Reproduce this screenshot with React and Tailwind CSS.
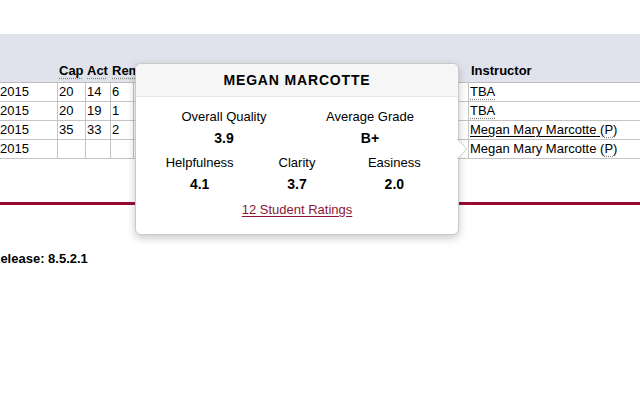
const ROWS = [
  { term: "2015", cap: "20", act: "14", rem: "6", instructor: "tba" },
  { term: "2015", cap: "20", act: "19", rem: "1", instructor: "tba" },
  { term: "2015", cap: "35", act: "33", rem: "2", instructor: "link" },
  { term: "2015", cap: "", act: "", rem: "", instructor: "plain" },
];

const dotted = "underline decoration-dotted decoration-[#888] underline-offset-[3px]";

function Instructor({ kind }) {
  if (kind === "tba") return <span className={dotted}>TBA</span>;
  return (
    <span>
      <span className={kind === "link" ? "underline underline-offset-[2px]" : ""}>
        Megan Mary Marcotte{" "}
      </span>
      (<span className={dotted}>P</span>)
    </span>
  );
}

function Stat({ label, value }) {
  return (
    <div className="flex flex-col items-center">
      <div className="leading-4">{label}</div>
      <div className="leading-4 mt-[5px] font-bold text-[14px]">{value}</div>
    </div>
  );
}

function RatingPopover() {
  return (
    <div className="absolute left-[135px] top-[63px] w-[324px] h-[172px] bg-white border border-[#c9c9c9] rounded-[6px] shadow-[0_3px_8px_rgba(0,0,0,0.22)]">
      <div className="h-[33px] bg-[#f6f6f6] border-b border-[#e6e6e6] rounded-t-[6px] flex items-center justify-center">
        <span className="font-bold text-[14px] tracking-[0.06em]">MEGAN MARCOTTE</span>
      </div>
      <div className="px-[15px] pt-[12px]">
        <div className="grid grid-cols-2">
          <Stat label="Overall Quality" value="3.9" />
          <Stat label="Average Grade" value="B+" />
        </div>
        <div className="grid grid-cols-3 mt-[9px]">
          <Stat label="Helpfulness" value="4.1" />
          <Stat label="Clarity" value="3.7" />
          <Stat label="Easiness" value="2.0" />
        </div>
        <div className="mt-[10px] text-center leading-4">
          <span className="text-[#8c1538] underline underline-offset-[2px]">12 Student Ratings</span>
        </div>
      </div>
      {/* arrow */}
      <svg className="absolute right-[-10px] top-[75px]" width="11" height="20" viewBox="0 0 11 20">
        <polygon points="0,0 10,10 0,20" fill="#fff" />
        <polyline points="0,0 10,10 0,20" fill="none" stroke="#d0d0d0" strokeWidth="1" />
      </svg>
    </div>
  );
}

export default function App() {
  return (
    <div className="relative w-[640px] h-[400px] overflow-hidden bg-white text-black text-[13px] font-['Liberation_Sans',Arial,sans-serif]">
      <div className="h-[34px]" />
      {/* header band */}
      <div className="h-[49px] bg-[#e1e3ec] border-b border-[#bdbdbd] flex items-end pb-[2px] font-bold">
        <div className="w-[58px]" />
        <div className="w-[28px] pl-[1px]"><span className={dotted}>Cap</span></div>
        <div className="w-[25px] pl-[1px]"><span className={dotted}>Act</span></div>
        <div className="w-[23px] pl-[1px] whitespace-nowrap"><span className={dotted}>Rem</span></div>
        <div className="w-[335px]" />
        <div className="pl-[2px]">Instructor</div>
      </div>
      {ROWS.map((r, i) => (
        <div key={i} className="h-[19px] flex border-b border-[#c4c4c4] leading-[18px]">
          <div className="w-[58px] border-r border-[#c4c4c4]">{r.term}</div>
          <div className="w-[28px] border-r border-[#c4c4c4] pl-[1px]">{r.cap}</div>
          <div className="w-[25px] border-r border-[#c4c4c4] pl-[1px]">{r.act}</div>
          <div className="w-[23px] border-r border-[#c4c4c4] pl-[1px]">{r.rem}</div>
          <div className="w-[335px] border-r border-[#c4c4c4]" />
          <div className="pl-[1px] whitespace-nowrap">
            <Instructor kind={r.instructor} />
          </div>
        </div>
      ))}
      <div className="mt-[43px] h-[3px] bg-[#990a32]" />
      <div className="mt-[46px] -ml-[9px] font-bold leading-4">Release: 8.5.2.1</div>
      <RatingPopover />
    </div>
  );
}
